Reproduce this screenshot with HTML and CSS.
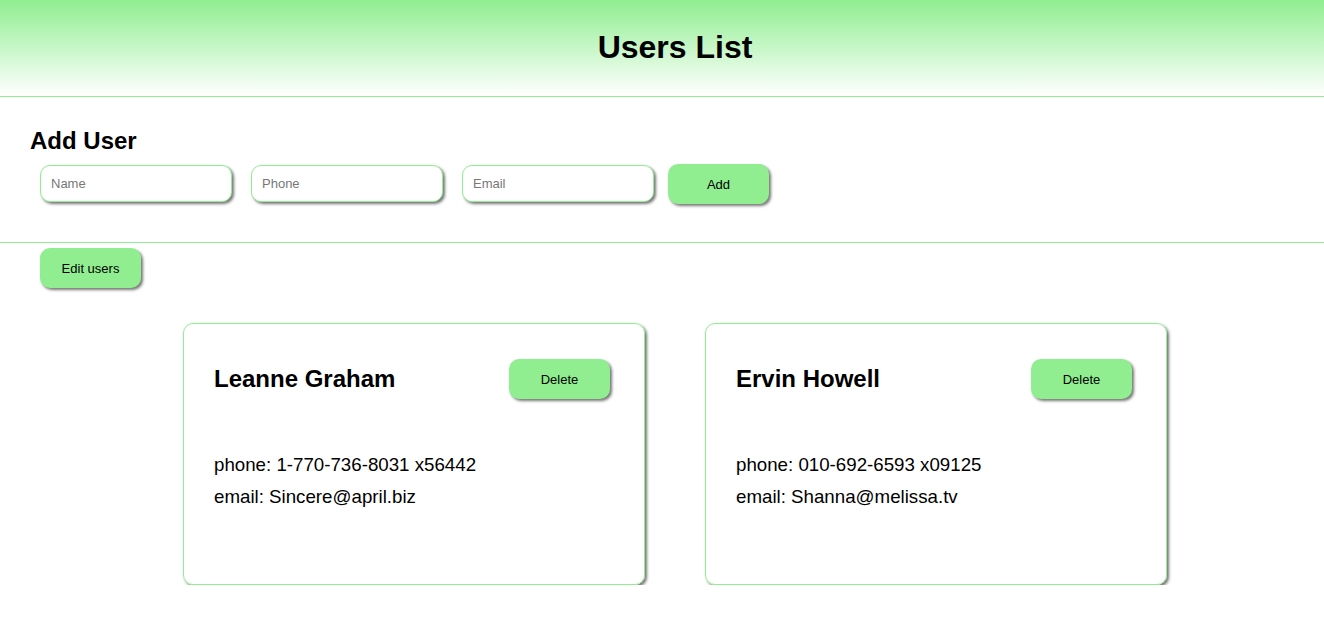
FILE: index.html
```html
<!DOCTYPE html>
<html>
<head>
<meta charset="utf-8">
<link rel="stylesheet" href="styles.css">
</head>
<body>
<header class="top">
  <h1 class="title">Users List</h1>
</header>
<section class="add-section">
  <h2 class="add-title">Add User</h2>
  <div class="form-row">
    <input class="field" type="text" placeholder="Name">
    <input class="field" type="text" placeholder="Phone">
    <input class="field" type="text" placeholder="Email">
    <button class="btn add-btn">Add</button>
  </div>
</section>
<div class="edit-row">
  <button class="btn">Edit users</button>
</div>
<main class="cards">
  <div class="card">
    <div class="card-head">
      <h2 class="name">Leanne Graham</h2>
      <button class="btn">Delete</button>
    </div>
    <p class="info first">phone: 1-770-736-8031 x56442</p>
    <p class="info">email: Sincere@april.biz</p>
  </div>
  <div class="card">
    <div class="card-head">
      <h2 class="name">Ervin Howell</h2>
      <button class="btn">Delete</button>
    </div>
    <p class="info first">phone: 010-692-6593 x09125</p>
    <p class="info">email: Shanna@melissa.tv</p>
  </div>
</main>
</body>
</html>
```
FILE: styles.css
```css
body {
  margin: 0;
  font-family: "Liberation Sans", Arial, sans-serif;
  color: #000;
  background: #fff;
}
.top {
  box-sizing: border-box;
  height: 97px;
  padding: 0 0 2px 26px;
  border-bottom: 1px solid #90ee90;
  background: linear-gradient(to bottom, #90ee90, #ffffff);
  display: flex;
  align-items: center;
  justify-content: center;
}
.title {
  margin: 0;
  font-size: 32px;
  font-weight: bold;
}
.add-section {
  box-sizing: border-box;
  height: 146px;
  padding: 30px 30px 0;
  border-bottom: 1px solid #90ee90;
}
.add-title {
  margin: 0;
  font-size: 24px;
  line-height: 28px;
}
.form-row {
  display: flex;
  align-items: flex-start;
  margin-top: 9px;
  padding-left: 10px;
}
.field {
  box-sizing: border-box;
  width: 192px;
  height: 37px;
  margin-top: 1px;
  margin-right: 19px;
  padding: 0 10px 1px;
  border: 1px solid #90ee90;
  border-radius: 10px;
  box-shadow: 2px 2px 3px #777;
  font-family: "Liberation Sans", Arial, sans-serif;
  font-size: 13px;
  outline: none;
}
.field::placeholder {
  color: #777;
}
.btn {
  box-sizing: border-box;
  width: 101px;
  height: 40px;
  border: none;
  border-radius: 10px;
  background: #90ee90;
  box-shadow: 2px 2px 3px #777;
  font-family: "Liberation Sans", Arial, sans-serif;
  font-size: 13px;
  color: #000;
  cursor: pointer;
}
.add-btn {
  margin-left: -5px;
}
.edit-row {
  padding: 5px 0 0 40px;
}
.cards {
  display: flex;
  justify-content: center;
  gap: 60px;
  padding: 35px 0 0 26px;
}
.card {
  box-sizing: border-box;
  width: 462px;
  height: 262px;
  padding: 35px 34px 0 30px;
  border: 1px solid #90ee90;
  border-radius: 10px;
  box-shadow: 2px 2px 3px #777;
}
.card-head {
  display: flex;
  align-items: center;
  justify-content: space-between;
  height: 40px;
}
.name {
  margin: 0;
  font-size: 24px;
}
.info {
  margin: 0;
  font-size: 18.72px;
  line-height: 32px;
}
.info.first {
  margin-top: 50px;
}
```
